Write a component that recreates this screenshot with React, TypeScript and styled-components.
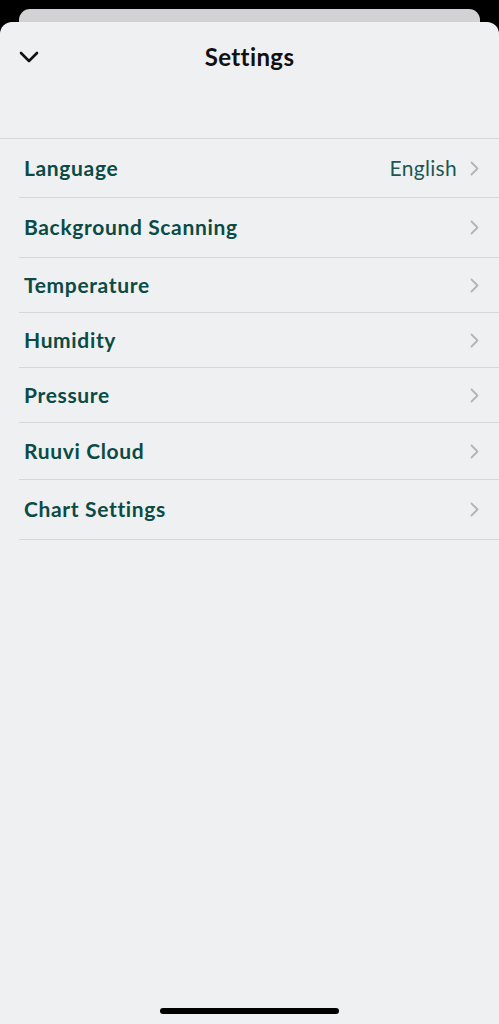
import styled, { createGlobalStyle } from "styled-components";

const GlobalStyle = createGlobalStyle`
  html, body {
    margin: 0;
    padding: 0;
    background: #000;
  }
  body {
    font-family: "Lato", "Noto Sans", sans-serif;
    -webkit-font-smoothing: antialiased;
  }
`;

interface SettingItem {
  label: string;
  value?: string;
  height: number;
}

const items: SettingItem[] = [
  { label: "Language", value: "English", height: 59 },
  { label: "Background Scanning", height: 60 },
  { label: "Temperature", height: 55 },
  { label: "Humidity", height: 55 },
  { label: "Pressure", height: 55 },
  { label: "Ruuvi Cloud", height: 57 },
  { label: "Chart Settings", height: 60 },
];

const Screen = styled.div`
  position: relative;
  width: 499px;
  height: 1024px;
  overflow: hidden;
  background: #000;
  display: flex;
  flex-direction: column;
`;

const BackCard = styled.div`
  height: 13px;
  margin: 9px 19px 0;
  background: #d2d2d4;
  border-radius: 11px 11px 0 0;
`;

const Sheet = styled.div`
  flex: 1;
  display: flex;
  flex-direction: column;
  background: #eff0f2;
  border-radius: 12px 12px 0 0;
`;

const Header = styled.div`
  position: relative;
  height: 70px;
  display: flex;
  align-items: center;
  justify-content: center;
`;

const CloseButton = styled.button`
  position: absolute;
  left: 17px;
  top: 23px;
  width: 24px;
  height: 24px;
  padding: 0;
  border: none;
  background: none;
  display: flex;
  align-items: center;
  justify-content: center;
  color: #111;
`;

const Title = styled.h1`
  margin: 0 0 1px;
  font-size: 24px;
  font-weight: 700;
  color: #111;
  letter-spacing: 0.4px;
`;

const List = styled.div`
  margin-top: 46px;
  border-top: 1px solid #d6d7d9;
`;

const Row = styled.div<{ $h: number }>`
  height: ${(p) => p.$h - 1}px;
  margin-left: 19px;
  padding: 0 19px 0 5px;
  display: flex;
  align-items: center;
  border-bottom: 1px solid #d6d7d9;
`;

const Label = styled.span`
  flex: 1;
  padding-bottom: 2px;
  font-size: 21px;
  font-weight: 700;
  color: #0b4b45;
  letter-spacing: 0.65px;
`;

const Value = styled.span`
  padding-bottom: 2px;
  font-size: 21px;
  font-weight: 400;
  color: #1b5853;
  margin-right: 12px;
  letter-spacing: 0.3px;
`;

const HomeIndicator = styled.div`
  margin: auto auto 10px;
  width: 179px;
  height: 6px;
  border-radius: 3px;
  background: #000;
`;

const ChevronDown = () => (
  <svg width="20" height="12" viewBox="0 0 20 12" fill="none">
    <path d="M2 2l8 8 8-8" stroke="currentColor" strokeWidth="2.6" strokeLinecap="round" strokeLinejoin="round" />
  </svg>
);

const ChevronRight = () => (
  <svg width="11" height="15" viewBox="0 0 11 15" fill="none">
    <path d="M2.5 1.5l6 6-6 6" stroke="#b3b4b7" strokeWidth="1.8" strokeLinecap="round" strokeLinejoin="round" />
  </svg>
);

export default function App() {
  return (
    <>
      <GlobalStyle />
      <Screen>
        <BackCard />
        <Sheet>
          <Header>
            <CloseButton aria-label="Close">
              <ChevronDown />
            </CloseButton>
            <Title>Settings</Title>
          </Header>
          <List>
            {items.map((item) => (
              <Row key={item.label} $h={item.height}>
                <Label>{item.label}</Label>
                {item.value && <Value>{item.value}</Value>}
                <ChevronRight />
              </Row>
            ))}
          </List>
          <HomeIndicator />
        </Sheet>
      </Screen>
    </>
  );
}
